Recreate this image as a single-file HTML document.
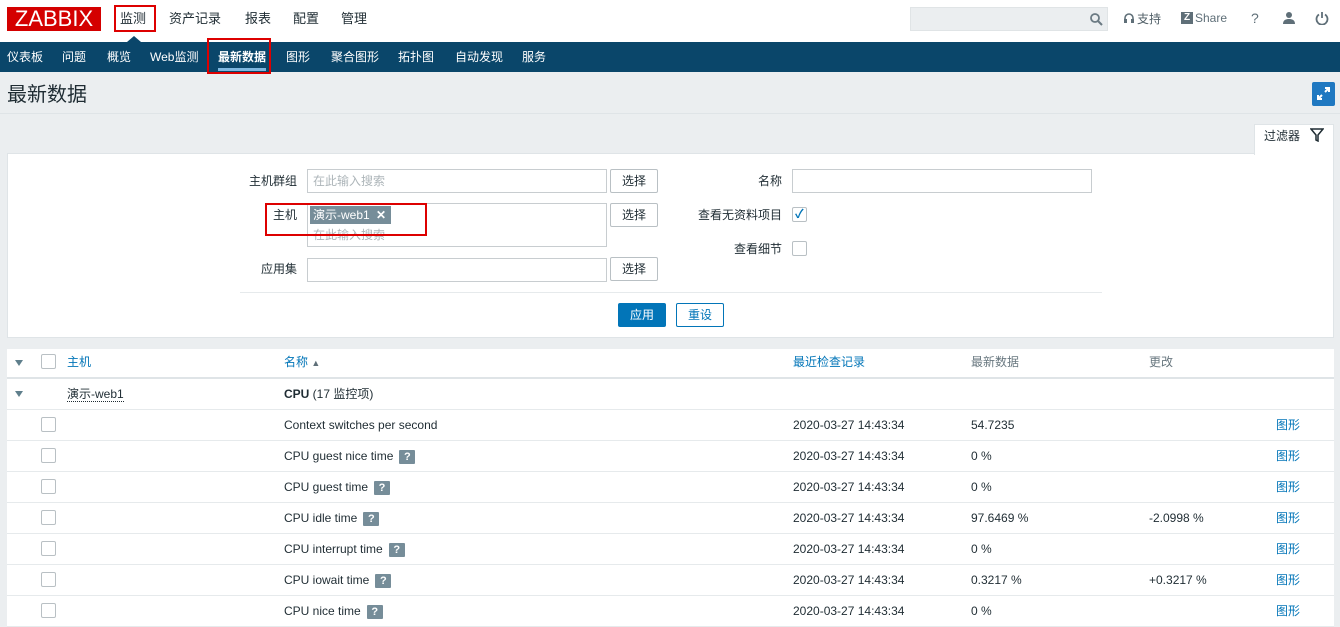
<!DOCTYPE html>
<html><head><meta charset="utf-8"><style>
*{margin:0;padding:0;box-sizing:border-box}
body{width:1340px;height:612px;overflow:hidden;background:#ebeef0;font-family:"Liberation Sans","Noto Sans CJK SC",sans-serif;font-size:12px;color:#1f2c33;position:relative}
.a{position:absolute;white-space:nowrap;line-height:14px}
.top{position:absolute;left:0;top:0;width:1340px;height:42px;background:#fff}
.nav{position:absolute;left:0;top:42px;width:1340px;height:30px;background:#0a466a}
.nav span{position:absolute;top:8px;color:#fff;font-size:12px;line-height:14px}
.menu{font-size:13px;color:#1f2c33;top:12px}
.inp{position:absolute;background:#fff;border:1px solid #c8cdd0;height:24px}
.btn{position:absolute;height:24px;border:1px solid #b9c0c4;background:#fff;border-radius:2px;text-align:center;line-height:22px;font-size:12px;color:#1f2c33}
.ph{color:#adb5b9}
.row{position:absolute;left:7px;width:1327px;height:31px;background:#fff;border-bottom:1px solid #e6eaec}
.cb{position:absolute;width:15px;height:15px;border:1px solid #b9c0c4;background:#fff;border-radius:2px}
.row .a{top:0;line-height:30px}
.lnk{color:#0275b8}
.q{display:inline-block;width:16px;height:14px;background:#768d99;color:#fff;font-size:11px;font-weight:bold;text-align:center;line-height:14px;margin-left:6px;vertical-align:middle;border-radius:1px}
.red{position:absolute;border:2px solid #d00}
</style></head><body>
<div class="top"></div>
<div class="a" style="left:7px;top:7px;width:94px;height:24px;background:#d40000;color:#fff;font-size:22px;line-height:24px;text-align:center;letter-spacing:0px">ZABBIX</div>
<div class="a menu" style="left:120px">监测</div>
<div class="red" style="left:114px;top:5px;width:42px;height:27px"></div>
<div class="a menu" style="left:169px">资产记录</div>
<div class="a menu" style="left:245px">报表</div>
<div class="a menu" style="left:293px">配置</div>
<div class="a menu" style="left:341px">管理</div>
<div class="a" style="left:127px;top:36px;width:0;height:0;border-left:7px solid transparent;border-right:7px solid transparent;border-bottom:6px solid #0a466a"></div>
<div class="a" style="left:910px;top:7px;width:198px;height:24px;background:#ebeef0;border:1px solid #e0e4e6"></div>
<svg class="a" style="left:1089px;top:12px" width="14" height="14" viewBox="0 0 14 14"><circle cx="6" cy="6" r="4" stroke="#6b7a83" stroke-width="1.8" fill="none"/><path d="M9 9l4 4" stroke="#6b7a83" stroke-width="2"/></svg>
<svg class="a" style="left:1123px;top:12px" width="12" height="13" viewBox="0 0 12 13"><path d="M2 9V6a4 4 0 0 1 8 0v3" stroke="#5f6f78" stroke-width="1.6" fill="none"/><rect x="1" y="7" width="3" height="4" fill="#5f6f78"/><rect x="8" y="7" width="3" height="4" fill="#5f6f78"/></svg>
<div class="a" style="left:1137px;top:12px;color:#4f5e66;font-size:12px">支持</div>
<div class="a" style="left:1181px;top:12px;width:12px;height:12px;background:#5f6f78;color:#fff;font-size:10px;font-weight:bold;text-align:center;line-height:12px">Z</div>
<div class="a" style="left:1195px;top:11px;color:#5f6f78;font-size:12px">Share</div>
<div class="a" style="left:1251px;top:11px;color:#5f6f78;font-size:14px">?</div>
<svg class="a" style="left:1282px;top:11px" width="14" height="14" viewBox="0 0 14 14"><circle cx="7" cy="4" r="3" fill="#5f6f78"/><path d="M1 13c0-4 3-5 6-5s6 1 6 5z" fill="#5f6f78"/></svg>
<svg class="a" style="left:1315px;top:11px" width="14" height="14" viewBox="0 0 14 14"><path d="M4 3.5A5.5 5.5 0 1 0 10 3.5" stroke="#5f6f78" stroke-width="1.8" fill="none"/><path d="M7 1v6" stroke="#5f6f78" stroke-width="1.8"/></svg>
<div class="nav">
<span style="left:7px">仪表板</span><span style="left:62px">问题</span><span style="left:107px">概览</span><span style="left:150px">Web监测</span><span style="left:218px;font-weight:bold">最新数据</span><span style="left:286px">图形</span><span style="left:331px">聚合图形</span><span style="left:398px">拓扑图</span><span style="left:455px">自动发现</span><span style="left:522px">服务</span>
<div class="a" style="left:218px;top:26px;width:48px;height:3px;background:#7fb7e0"></div>
</div>
<div class="red" style="left:207px;top:38px;width:64px;height:36px"></div>
<div class="a" style="left:7px;top:84px;font-size:20px;line-height:22px;color:#1f2c33">最新数据</div>
<div class="a" style="left:1312px;top:82px;width:23px;height:24px;background:#1f78c1;border-radius:2px"></div>
<svg class="a" style="left:1316px;top:86px" width="15" height="15" viewBox="0 0 15 15"><path d="M9 2h4v4M13 2l-4 4M6 13H2V9M2 13l4-4" stroke="#fff" stroke-width="2" fill="none"/></svg>
<div class="a" style="left:0;top:113px;width:1340px;height:1px;background:#dfe4e7"></div>
<div class="a" style="left:7px;top:153px;width:1327px;height:185px;background:#fff;border:1px solid #dfe4e7"></div>
<div class="a" style="left:1254px;top:124px;width:80px;height:31px;background:#fff;border:1px solid #dfe4e7;border-bottom:none"></div>
<div class="a" style="left:1264px;top:129px">过滤器</div>
<svg class="a" style="left:1310px;top:128px" width="14" height="14" viewBox="0 0 14 14"><path d="M1 1h12L8 7v6l-2-1V7z" stroke="#1f2c33" stroke-width="1.5" fill="none"/></svg>
<div class="a" style="left:249px;top:174px">主机群组</div>
<div class="inp" style="left:307px;top:169px;width:300px"></div><div class="a ph" style="left:313px;top:174px">在此输入搜索</div>
<div class="btn" style="left:610px;top:169px;width:48px">选择</div>
<div class="a" style="left:273px;top:208px">主机</div>
<div class="inp" style="left:307px;top:203px;width:300px;height:44px"></div>
<div class="a" style="left:310px;top:206px;width:81px;height:18px;background:#768d99;color:#fff;line-height:18px;padding-left:3px">演示-web1 <b style="margin-left:3px">✕</b></div>
<div class="a ph" style="left:313px;top:228px">在此输入搜索</div>
<div class="red" style="left:265px;top:203px;width:162px;height:33px"></div>
<div class="btn" style="left:610px;top:203px;width:48px">选择</div>
<div class="a" style="left:261px;top:262px">应用集</div>
<div class="inp" style="left:307px;top:258px;width:300px"></div>
<div class="btn" style="left:610px;top:257px;width:48px">选择</div>
<div class="a" style="left:758px;top:174px">名称</div>
<div class="inp" style="left:792px;top:169px;width:300px"></div>
<div class="a" style="left:698px;top:208px">查看无资料项目</div>
<div class="cb" style="left:792px;top:207px"></div>
<div class="a" style="left:795px;top:207px;color:#0275b8;font-size:12px;font-weight:bold">✓</div>
<div class="a" style="left:734px;top:242px">查看细节</div>
<div class="cb" style="left:792px;top:241px"></div>
<div class="a" style="left:240px;top:292px;width:862px;height:1px;background:#e6eaec"></div>
<div class="a" style="left:618px;top:303px;width:48px;height:24px;background:#0275b8;border-radius:2px;color:#fff;text-align:center;line-height:24px">应用</div>
<div class="btn" style="left:676px;top:303px;width:48px;border-color:#0275b8;color:#0275b8">重设</div>

<div class="row" style="top:349px;height:30px;border-bottom:2px solid #dfe4e7">
<div class="a" style="left:8px;top:11px;border-left:4px solid transparent;border-right:4px solid transparent;border-top:6px solid #5f7f8c"></div>
<div class="cb" style="left:34px;top:5px"></div>
<div class="a lnk" style="left:60px;line-height:27px">主机</div>
<div class="a lnk" style="left:277px;line-height:27px">名称 <span style="font-size:9px;color:#5f6f78">▲</span></div>
<div class="a lnk" style="left:786px;line-height:27px">最近检查记录</div>
<div class="a" style="left:964px;color:#68777f;line-height:27px">最新数据</div>
<div class="a" style="left:1142px;color:#68777f;line-height:27px">更改</div>
</div>
<div class="row" style="top:379px">
<div class="a" style="left:8px;top:12px;border-left:4px solid transparent;border-right:4px solid transparent;border-top:6px solid #5f7f8c"></div>
<div class="a" style="left:60px;top:8px;line-height:14px;border-bottom:1px dotted #1f2c33">演示-web1</div>
<div class="a" style="left:277px"><b>CPU</b> (17 监控项)</div>
</div>
<div class="row" style="top:410px"><div class="cb" style="left:34px;top:7px"></div><div class="a" style="left:277px">Context switches per second</div><div class="a" style="left:786px">2020-03-27 14:43:34</div><div class="a" style="left:964px">54.7235</div><div class="a lnk" style="left:1269px">图形</div></div>
<div class="row" style="top:441px"><div class="cb" style="left:34px;top:7px"></div><div class="a" style="left:277px">CPU guest nice time<span class="q">?</span></div><div class="a" style="left:786px">2020-03-27 14:43:34</div><div class="a" style="left:964px">0 %</div><div class="a lnk" style="left:1269px">图形</div></div>
<div class="row" style="top:472px"><div class="cb" style="left:34px;top:7px"></div><div class="a" style="left:277px">CPU guest time<span class="q">?</span></div><div class="a" style="left:786px">2020-03-27 14:43:34</div><div class="a" style="left:964px">0 %</div><div class="a lnk" style="left:1269px">图形</div></div>
<div class="row" style="top:503px"><div class="cb" style="left:34px;top:7px"></div><div class="a" style="left:277px">CPU idle time<span class="q">?</span></div><div class="a" style="left:786px">2020-03-27 14:43:34</div><div class="a" style="left:964px">97.6469 %</div><div class="a" style="left:1142px">-2.0998 %</div><div class="a lnk" style="left:1269px">图形</div></div>
<div class="row" style="top:534px"><div class="cb" style="left:34px;top:7px"></div><div class="a" style="left:277px">CPU interrupt time<span class="q">?</span></div><div class="a" style="left:786px">2020-03-27 14:43:34</div><div class="a" style="left:964px">0 %</div><div class="a lnk" style="left:1269px">图形</div></div>
<div class="row" style="top:565px"><div class="cb" style="left:34px;top:7px"></div><div class="a" style="left:277px">CPU iowait time<span class="q">?</span></div><div class="a" style="left:786px">2020-03-27 14:43:34</div><div class="a" style="left:964px">0.3217 %</div><div class="a" style="left:1142px">+0.3217 %</div><div class="a lnk" style="left:1269px">图形</div></div>
<div class="row" style="top:596px"><div class="cb" style="left:34px;top:7px"></div><div class="a" style="left:277px">CPU nice time<span class="q">?</span></div><div class="a" style="left:786px">2020-03-27 14:43:34</div><div class="a" style="left:964px">0 %</div><div class="a lnk" style="left:1269px">图形</div></div>
</body></html>
